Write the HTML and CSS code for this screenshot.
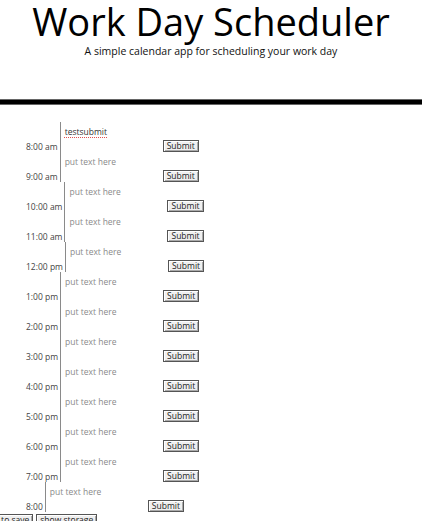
FILE: index.html
```html
<!DOCTYPE html>
<html>
<head>
<meta charset="utf-8">
<link rel="stylesheet" href="styles.css">
</head>
<body>
<header class="header">
  <h1 class="title">Work Day Scheduler</h1>
  <p class="lead">A simple calendar app for scheduling your work day</p>
</header>
<div class="rule"></div>
<main class="schedule">
  <div class="row"><span class="hour">8:00 am</span><textarea class="entry entry-filled">testsubmit</textarea><button class="btn">Submit</button></div>
  <div class="row"><span class="hour">9:00 am</span><textarea class="entry" placeholder="put text here"></textarea><button class="btn">Submit</button></div>
  <div class="row"><span class="hour">10:00 am</span><textarea class="entry" placeholder="put text here"></textarea><button class="btn">Submit</button></div>
  <div class="row"><span class="hour">11:00 am</span><textarea class="entry" placeholder="put text here"></textarea><button class="btn">Submit</button></div>
  <div class="row"><span class="hour">12:00 pm</span><textarea class="entry" placeholder="put text here"></textarea><button class="btn">Submit</button></div>
  <div class="row"><span class="hour">1:00 pm</span><textarea class="entry" placeholder="put text here"></textarea><button class="btn">Submit</button></div>
  <div class="row"><span class="hour">2:00 pm</span><textarea class="entry" placeholder="put text here"></textarea><button class="btn">Submit</button></div>
  <div class="row"><span class="hour">3:00 pm</span><textarea class="entry" placeholder="put text here"></textarea><button class="btn">Submit</button></div>
  <div class="row"><span class="hour">4:00 pm</span><textarea class="entry" placeholder="put text here"></textarea><button class="btn">Submit</button></div>
  <div class="row"><span class="hour">5:00 pm</span><textarea class="entry" placeholder="put text here"></textarea><button class="btn">Submit</button></div>
  <div class="row"><span class="hour">6:00 pm</span><textarea class="entry" placeholder="put text here"></textarea><button class="btn">Submit</button></div>
  <div class="row"><span class="hour">7:00 pm</span><textarea class="entry" placeholder="put text here"></textarea><button class="btn">Submit</button></div>
  <div class="row"><span class="hour">8:00</span><textarea class="entry" placeholder="put text here"></textarea><button class="btn">Submit</button></div>
</main>
<div class="controls">
  <button class="btn">click to save</button>
  <button class="btn">show storage</button>
</div>
</body>
</html>
```
FILE: styles.css
```css
html, body {
  margin: 0;
  padding: 0;
  background: #fff;
  font-family: "Open Sans", "Liberation Sans", sans-serif;
  color: #000;
}
.header {
  text-align: center;
}
.title {
  margin: 0;
  font-size: 38px;
  font-weight: 400;
  line-height: 42px;
  color: #000;
}
.lead {
  margin: 2px 0 0;
  font-size: 10.5px;
  line-height: 14px;
  color: #111;
}
.rule {
  margin-top: 41px;
  height: 4px;
  background: #000;
  border-top: 1px solid #666;
  border-bottom: 1px solid #666;
}
.schedule {
  margin-top: 17px;
  display: flex;
  flex-direction: column;
}
.row {
  display: flex;
  align-items: flex-end;
  padding-left: 26px;
  height: 30px;
}
.hour {
  font-size: 8.5px;
  line-height: 11px;
  color: #444;
  margin-right: 2px;
}
.entry {
  box-sizing: border-box;
  width: 100px;
  height: 30px;
  margin: 0;
  padding: 4px 4px 0 4px;
  border: none;
  border-left: 1px solid #8a8a8a;
  font-family: "Open Sans", "Liberation Sans", sans-serif;
  font-size: 8.5px;
  line-height: 11px;
  color: #333;
  resize: none;
  outline: none;
  background: transparent;
  overflow: hidden;
}
.entry-filled {
  text-decoration: underline dotted #e05050;
  text-underline-offset: 2px;
}
.entry::placeholder {
  color: #8a8a8a;
}
.btn {
  margin: 0 0 0 3px;
  padding: 0 3px;
  height: 12px;
  font-family: "Open Sans", "Liberation Sans", sans-serif;
  font-size: 8.5px;
  line-height: 8px;
  color: #222;
  background: #efefef;
  border: 1px solid #555;
  box-shadow: inset 1px 1px 0 #fff, inset -1px -1px 0 #aaa;
}
.controls {
  display: flex;
  gap: 3px;
  margin-top: 2px;
  margin-left: -22px;
}
.controls .btn {
  margin: 0;
}
```
